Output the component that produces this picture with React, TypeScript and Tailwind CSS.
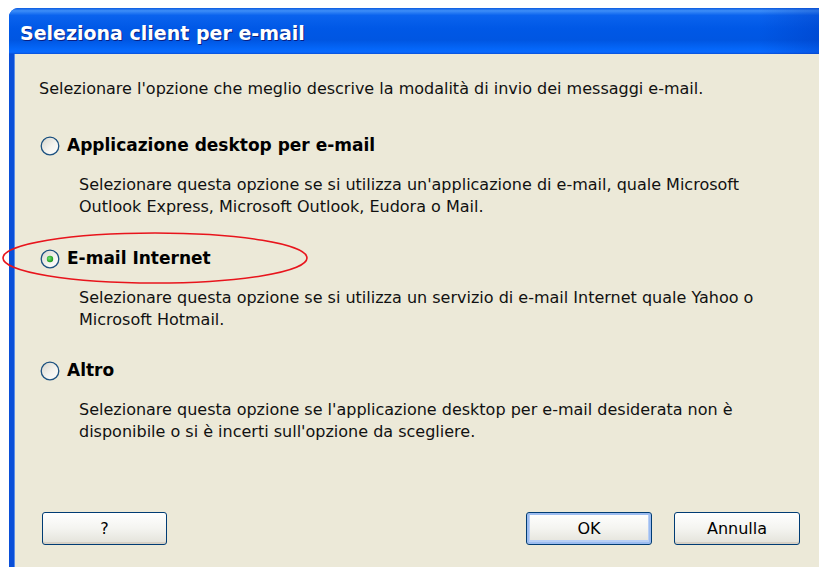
import React from "react";

const body = { fontFamily: '"DejaVu Sans", Verdana, sans-serif' };

function Radio({ checked }: { checked?: boolean }) {
  return (
    <svg width="20" height="20" viewBox="0 0 20 20" className="shrink-0">
      <defs>
        <linearGradient id={checked ? "rfc" : "rf"} x1="0" y1="0" x2="1" y2="1">
          <stop offset="0" stopColor="#d6d4ca" />
          <stop offset="0.55" stopColor="#f4f3ee" />
          <stop offset="1" stopColor="#ffffff" />
        </linearGradient>
        <radialGradient id="dot" cx="0.4" cy="0.4" r="0.6">
          <stop offset="0" stopColor="#6fe36f" />
          <stop offset="1" stopColor="#1d9a1d" />
        </radialGradient>
      </defs>
      <circle cx="10" cy="10" r="8.8" fill={`url(#${checked ? "rfc" : "rf"})`} stroke="#1c5180" strokeWidth="1.3" />
      {checked && <circle cx="10" cy="10" r="3.2" fill="url(#dot)" />}
    </svg>
  );
}

function Option({
  label,
  lines,
  checked,
  top,
}: {
  label: string;
  lines: string[];
  checked?: boolean;
  top: string;
}) {
  return (
    <div className={top}>
      <div className="flex h-[22px] items-center pl-[25px]">
        <Radio checked={checked} />
        <span className="ml-[7px] text-[17px] font-bold text-black">{label}</span>
      </div>
      <div className="mt-[17px] pl-[64px] text-[16px] leading-[22px] text-[#111]">
        {lines.map((l) => (
          <div key={l}>{l}</div>
        ))}
      </div>
    </div>
  );
}

function XpButton({ children, primary, width }: { children: React.ReactNode; primary?: boolean; width: string }) {
  return (
    <button
      className={`${width} h-[33px] rounded-[3px] border border-[#003c74] bg-gradient-to-b from-[#ffffff] via-[#f4f4f0] to-[#e3e2da] pt-[1px] text-[16px] text-black ${
        primary ? "shadow-[inset_0_0_0_2px_#9cbcf0,inset_0_-1px_0_3px_#b8cff5]" : "shadow-[inset_0_-2px_0_#d6d0c5]"
      }`}
      style={body}
    >
      {children}
    </button>
  );
}

export default function App() {
  return (
    <div className="relative h-[567px] w-[819px] overflow-hidden bg-white" style={body}>
      <div className="ml-[9px] mt-[8px] flex h-[559px] flex-col overflow-hidden rounded-tl-[9px] bg-[#0054e3]">
        {/* title bar */}
        <div className="relative h-[46px] shrink-0 bg-[linear-gradient(180deg,#0a5ae0_0%,#3d8ef8_6%,#0a63ee_16%,#0058e6_45%,#0056e2_70%,#0466f8_88%,#0a6aff_96%,#0a50d8_100%)]">
          <div className="absolute inset-y-0 right-0 w-[60px] bg-gradient-to-r from-transparent to-[#0030b0]/30" />
          <div className="relative flex h-full items-center pl-[11px] pt-[4px] text-[19px] font-bold text-white [text-shadow:1px_1px_0_#0a1e80]">
            Seleziona client per e-mail
          </div>
        </div>
        {/* body */}
        <div className="flex flex-1 border-l-[5px] border-l-[#0a4fd8] bg-[#ece9d8]">
          <div className="flex flex-1 flex-col border-l border-l-[#5b8ee8] pl-[24px] pt-[24px]">
            <div className="text-[16px] leading-[22px] text-[#111]">
              Selezionare l'opzione che meglio descrive la modalità di invio dei messaggi e-mail.
            </div>
            <Option
              top="mt-[35px] -ml-[24px]"
              label="Applicazione desktop per e-mail"
              lines={[
                "Selezionare questa opzione se si utilizza un'applicazione di e-mail, quale Microsoft",
                "Outlook Express, Microsoft Outlook, Eudora o Mail.",
              ]}
            />
            <Option
              top="mt-[30px] -ml-[24px]"
              checked
              label="E-mail Internet"
              lines={[
                "Selezionare questa opzione se si utilizza un servizio di e-mail Internet quale Yahoo o",
                "Microsoft Hotmail.",
              ]}
            />
            <Option
              top="mt-[29px] -ml-[24px]"
              label="Altro"
              lines={[
                "Selezionare questa opzione se l'applicazione desktop per e-mail desiderata non è",
                "disponibile o si è incerti sull'opzione da scegliere.",
              ]}
            />
            <div className="mt-[69px] flex items-center pr-[19px]">
              <div className="ml-[3px]">
                <XpButton width="w-[125px]">?</XpButton>
              </div>
              <div className="ml-auto flex gap-[22px]">
                <XpButton width="w-[126px]" primary>
                  OK
                </XpButton>
                <XpButton width="w-[126px]">Annulla</XpButton>
              </div>
            </div>
          </div>
        </div>
      </div>
      {/* red marker ring around the chosen option */}
      <svg className="pointer-events-none absolute left-0 top-0" width="819" height="567">
        <ellipse cx="155" cy="258" rx="152" ry="25" fill="none" stroke="#e8141c" strokeWidth="1.6" />
      </svg>
    </div>
  );
}
